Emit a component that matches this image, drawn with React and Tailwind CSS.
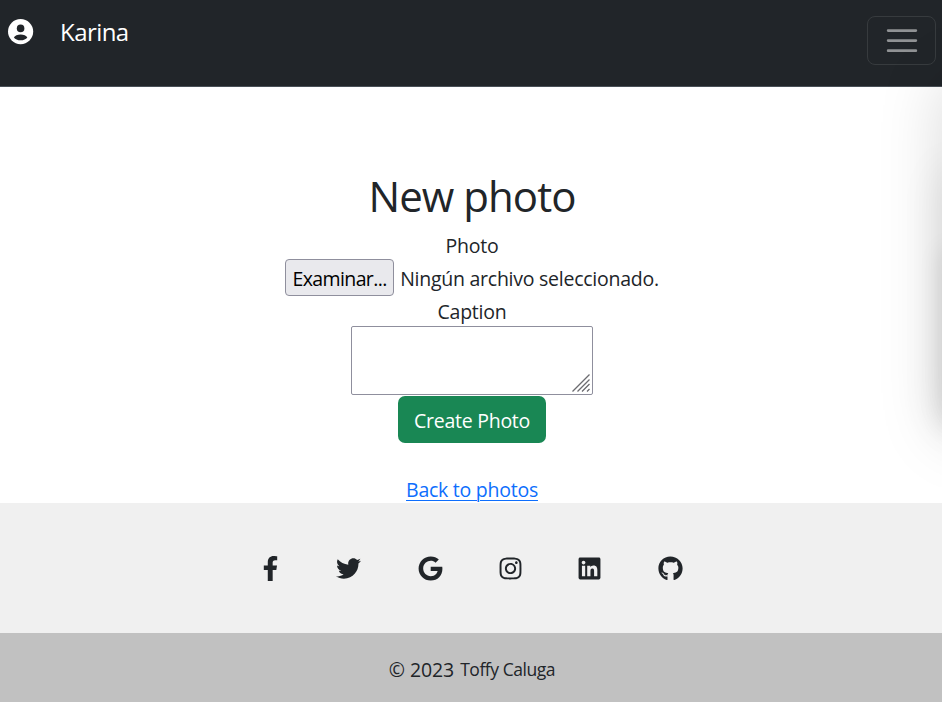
import React from "react";
import { FaFacebookF, FaTwitter, FaGoogle, FaInstagram, FaLinkedin, FaGithub } from "react-icons/fa";

function AccountIcon() {
  return (
    <svg viewBox="0 0 26 26" className="h-[26px] w-[26px]">
      <circle cx="12.6" cy="12.6" r="12.6" fill="#fff" />
      <circle cx="12.6" cy="9.4" r="3.8" fill="#212529" />
      <path d="M5.900 18.400C6.800 16.700 9.600 15.600 12.600 15.600s5.800 1.100 6.700 2.800C18 20.200 15.500 21.300 12.600 21.300S7.200 20.200 5.900 18.400Z" fill="#212529" />
    </svg>
  );
}

function Navbar() {
  return (
    <header className="flex h-[87px] shrink-0 items-start justify-between border-b border-[#495057] bg-[#212529] pl-2 pr-1.5">
      <div className="flex items-center pt-[14px] text-white">
        <AccountIcon />
        <span className="ml-[26px] text-[24px] leading-9 tracking-[-0.55px]">Karina</span>
      </div>
      <button className="mt-4 flex h-[49px] w-[69px] items-center justify-center rounded-[8px] border border-[#373b3e]">
        <svg viewBox="0 0 30 30" className="h-[38px] w-[38px]">
          <path d="M4 6.800h22M4 14.700h22M4 22.600h22" stroke="#909294" strokeWidth="2" strokeLinecap="round" />
        </svg>
      </button>
    </header>
  );
}

function ResizeGrip() {
  return (
    <svg viewBox="0 0 18 18" className="h-[18px] w-[18px]" stroke="#6b6b70" strokeWidth="1.3">
      <path d="M0.500 17.500L17.500 0.500M5.500 17.500L17.500 5.500M10 17.500L17.500 10M15 17.500L17.500 15" fill="none" />
    </svg>
  );
}

const socials = [
  { Icon: FaFacebookF, cell: "w-[50px]" },
  { Icon: FaTwitter, cell: "w-[50px] pr-[4px]" },
  { Icon: FaGoogle, cell: "w-[50px]" },
  { Icon: FaInstagram, cell: "w-[50px]" },
  { Icon: FaLinkedin, cell: "w-[50px] pr-px" },
  { Icon: FaGithub, cell: "w-[50px]" },
];

export default function App() {
  return (
    <div className="relative flex h-[702px] w-[942px] flex-col overflow-hidden bg-white font-['Open_Sans','Noto_Sans',sans-serif] text-[19.5px] leading-[33px] tracking-[-0.25px] text-[#212529]">
      <Navbar />
      <main className="flex h-[416px] shrink-0 flex-col items-center pt-[84px] pl-[2px]">
        <h1 className="h-[58px] shrink-0 text-[42px] leading-[50px] tracking-[-0.95px]">New photo</h1>
        <label className="h-[30px] shrink-0">Photo</label>
        <div className="flex h-[37px] shrink-0 items-center gap-[6px]">
          <button className="h-[37px] w-[109px] rounded-[4px] border border-[#8f8f9d] bg-[#e9e9ed] pt-px text-center tracking-[-0.6px] text-black">Examinar...</button>
          <span className="whitespace-nowrap pt-[2px]">Ningún archivo seleccionado.</span>
        </div>
        <label className="h-[30px] shrink-0 leading-[31px]">Caption</label>
        <div className="flex h-[69px] w-[242px] shrink-0 items-end justify-end rounded-[2px] border border-[#8f8f9d] bg-white p-0.5">
          <ResizeGrip />
        </div>
        <button className="mt-[1px] h-[47px] w-[148px] shrink-0 rounded-[7px] bg-[#198754] pt-[2px] text-white">Create Photo</button>
        <a className="mt-[30px] shrink-0 text-[#0d6efd] underline decoration-1 underline-offset-[3px]">Back to photos</a>
      </main>
      <footer className="flex shrink-0 flex-col">
        <div className="flex h-[130px] items-center justify-center gap-[30px] bg-[#f0f0f0] pr-[2px]">
          {socials.map(({ Icon, cell }, i) => (
            <a key={i} className={`flex justify-center ${cell}`}><Icon size={25} /></a>
          ))}
        </div>
        <div className="flex h-[69px] items-center justify-center gap-[6px] bg-[#c1c1c1] pt-1 pl-[2px]">
          <span className="tracking-[-0.1px]">© 2023</span>
          <span className="text-[17.5px] tracking-[-0.45px]">Toffy Caluga</span>
        </div>
      </footer>
      <div className="pointer-events-none absolute left-[942px] top-[60px] h-[355px] w-[400px] shadow-[0_20px_60px_rgba(0,0,0,0.15)]" />
      <div className="pointer-events-none absolute left-[942px] top-[160px] h-[255px] w-[400px] shadow-[0_10px_40px_rgba(0,0,0,0.09)]" />
      <div className="pointer-events-none absolute left-[942px] top-[240px] h-[175px] w-[400px] shadow-[0_10px_24px_rgba(0,0,0,0.09)]" />
    </div>
  );
}
